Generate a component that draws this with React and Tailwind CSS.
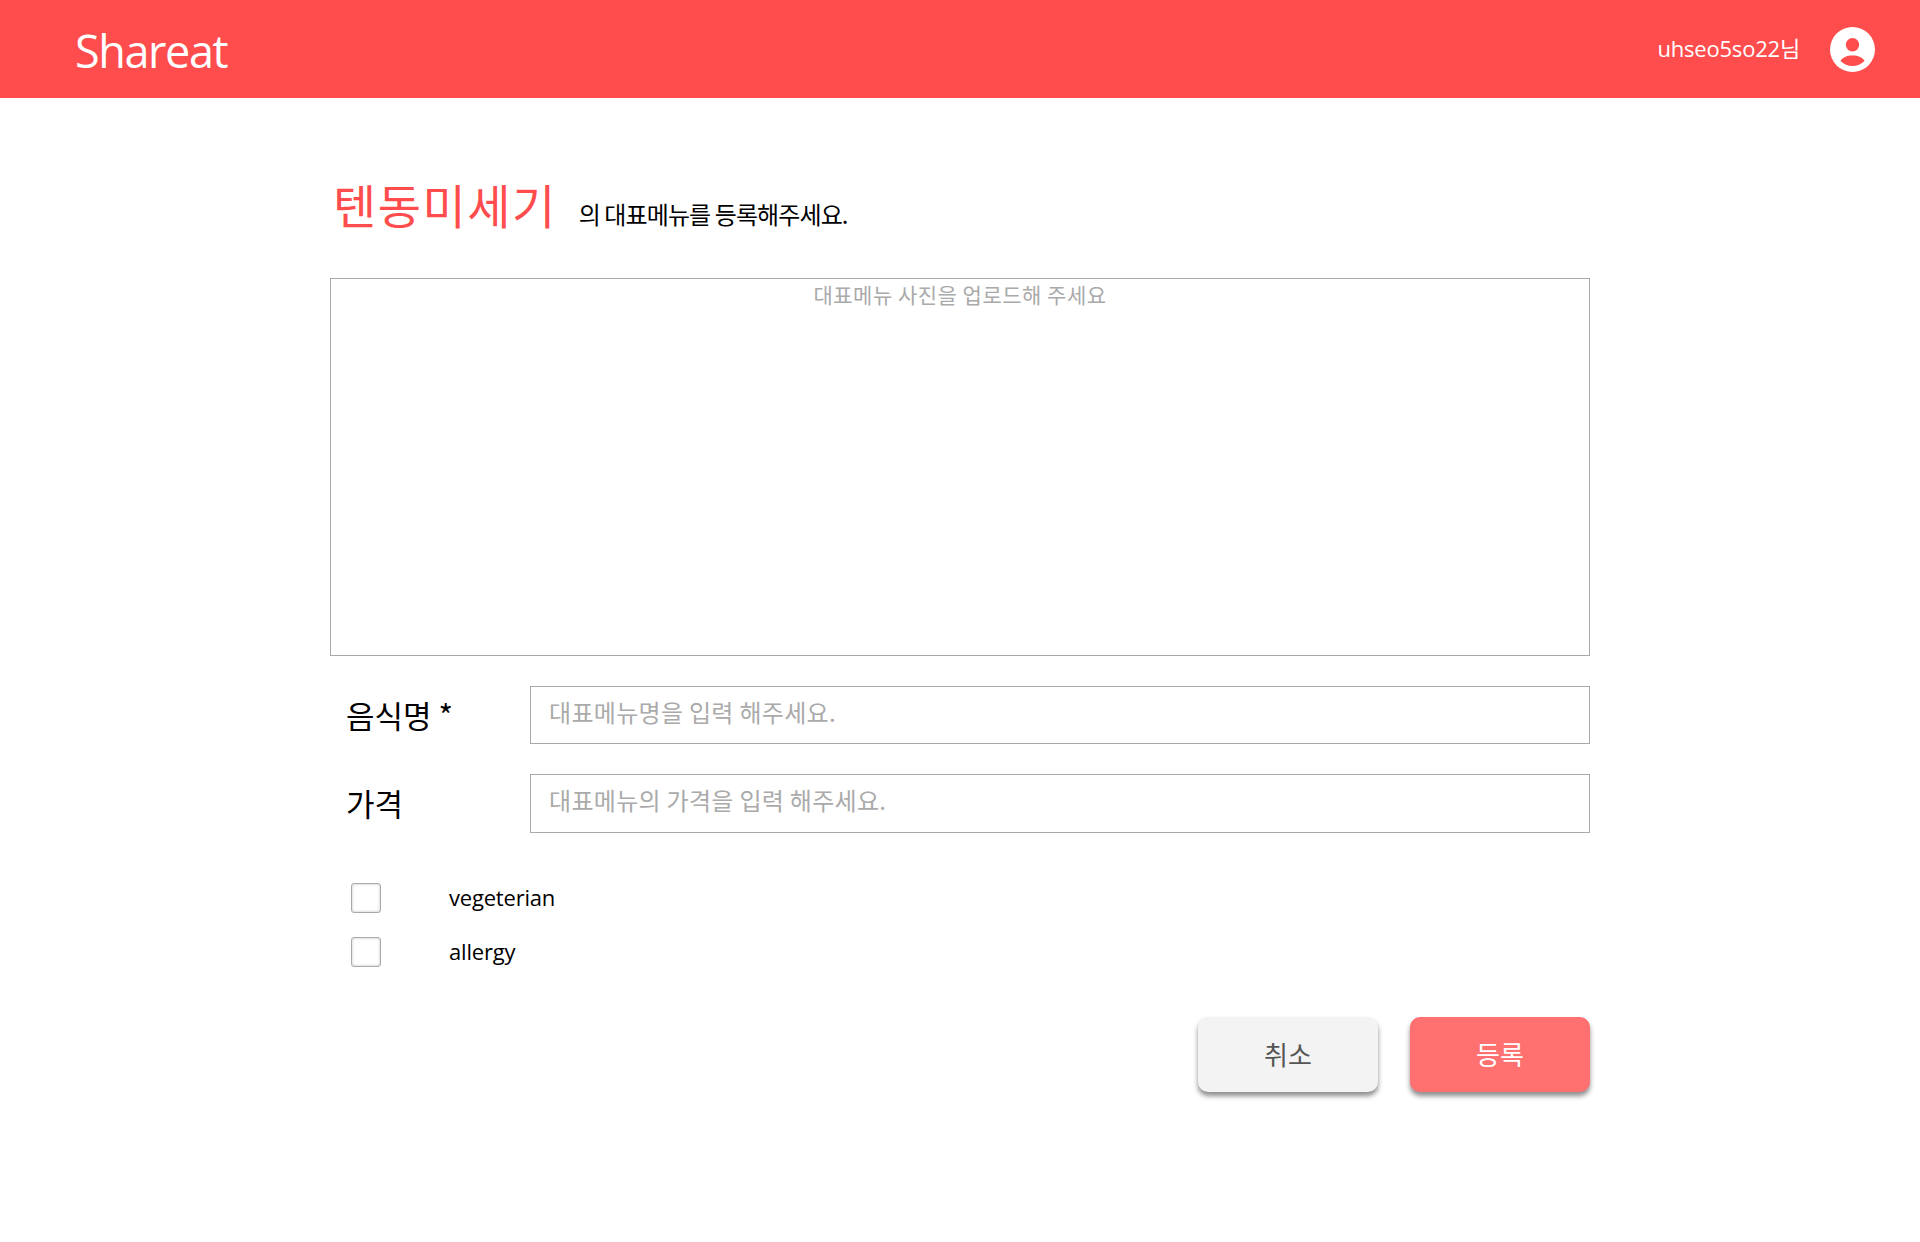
const fontFamily = "font-['Malgun_Gothic','Noto_Sans_CJK_KR','Noto_Sans',sans-serif]"

const UserIcon = () => (
    <svg width="45" height="45" viewBox="0 0 45 45">
        <circle cx="22.5" cy="22.5" r="22.5" fill="#fff" />
        <circle cx="22.5" cy="17.8" r="6.7" fill="#ff4d4d" />
        <path d="M10.5 34 C12 30.5 17 28.5 22.5 28.5 S33 30.5 34.5 34 C31.5 37 27 39 22.5 39 S13.5 37 10.5 34Z" fill="#ff4d4d" />
    </svg>
)

const Header = () => (
    <header className="h-[98px] bg-[#ff4d4d] flex items-center justify-between pl-[75px] pr-[45px] text-white">
        <h1 className="text-[45px] leading-none font-normal font-['Open_Sans',sans-serif] tracking-[-1.4px] pt-[2px]">Shareat</h1>
        <div className="flex items-center gap-[30px]">
            <span className="text-[22px] leading-none pb-[3px] font-['Open_Sans','Noto_Sans_CJK_KR',sans-serif] tracking-[-0.2px]">uhseo5so22님</span>
            <UserIcon />
        </div>
    </header>
)

const Field = ({ label, placeholder, height }) => (
    <div className={`flex items-center ${height}`}>
        <label className="w-[200px] shrink-0 pl-[16px] text-[31px] text-black">{label}</label>
        <input
            type="text"
            placeholder={placeholder}
            className="flex-1 min-w-0 h-full border border-[#aaaaaa] px-[18px] pb-[8px] text-[24px] tracking-[0.3px] outline-none placeholder:text-[#aaaaaa]"
        />
    </div>
)

const Check = ({ label }) => (
    <label className="flex items-center h-[30px]">
        <span className="ml-[21px] w-[30px] h-[30px] rounded-[3px] border border-[#aaaaaa] bg-white shadow-[inset_0_0_3px_rgba(0,0,0,0.25)]"></span>
        <span className="ml-[68px] pb-[2px] text-[22px] font-['Open_Sans',sans-serif] tracking-[-0.2px] text-black">{label}</span>
    </label>
)

export default function App() {
    return (
        <div className={`min-h-[1242px] bg-white ${fontFamily}`}>
            <Header />
            <main className="w-[1260px] mx-auto">
                <div className="flex items-end h-[180px] pb-[44px]">
                    <h2 className="text-[47px] leading-[60px] text-[#ff4d4d] tracking-[1.5px] ml-[3px]">텐동미세기</h2>
                    <p className="ml-[22px] text-[24px] leading-[40px] text-black tracking-[-0.9px]">의 대표메뉴를 등록해주세요.</p>
                </div>
                <div className="h-[378px] border border-[#aaaaaa] text-center text-[21px] leading-[30px] tracking-[0.5px] text-[#aaaaaa]">
                    대표메뉴 사진을 업로드해 주세요
                </div>
                <div className="mt-[30px] flex flex-col gap-[30px]">
                    <Field label="음식명 *" placeholder="대표메뉴명을 입력 해주세요." height="h-[58px]" />
                    <Field label="가격" placeholder="대표메뉴의 가격을 입력 해주세요." height="h-[59px]" />
                </div>
                <div className="mt-[50px] flex flex-col gap-[24px]">
                    <Check label="vegeterian" />
                    <Check label="allergy" />
                </div>
                <div className="mt-[50px] flex justify-end gap-[32px]">
                    <button className="w-[180px] h-[75px] pb-[2px] rounded-[10px] bg-[#f3f3f3] text-[#555555] text-[26px] shadow-[0_4px_5px_rgba(0,0,0,0.45)]">취소</button>
                    <button className="w-[180px] h-[75px] pb-[2px] rounded-[10px] bg-[#ff7070] text-white text-[26px] shadow-[0_4px_5px_rgba(0,0,0,0.45)]">등록</button>
                </div>
            </main>
        </div>
    )
}
